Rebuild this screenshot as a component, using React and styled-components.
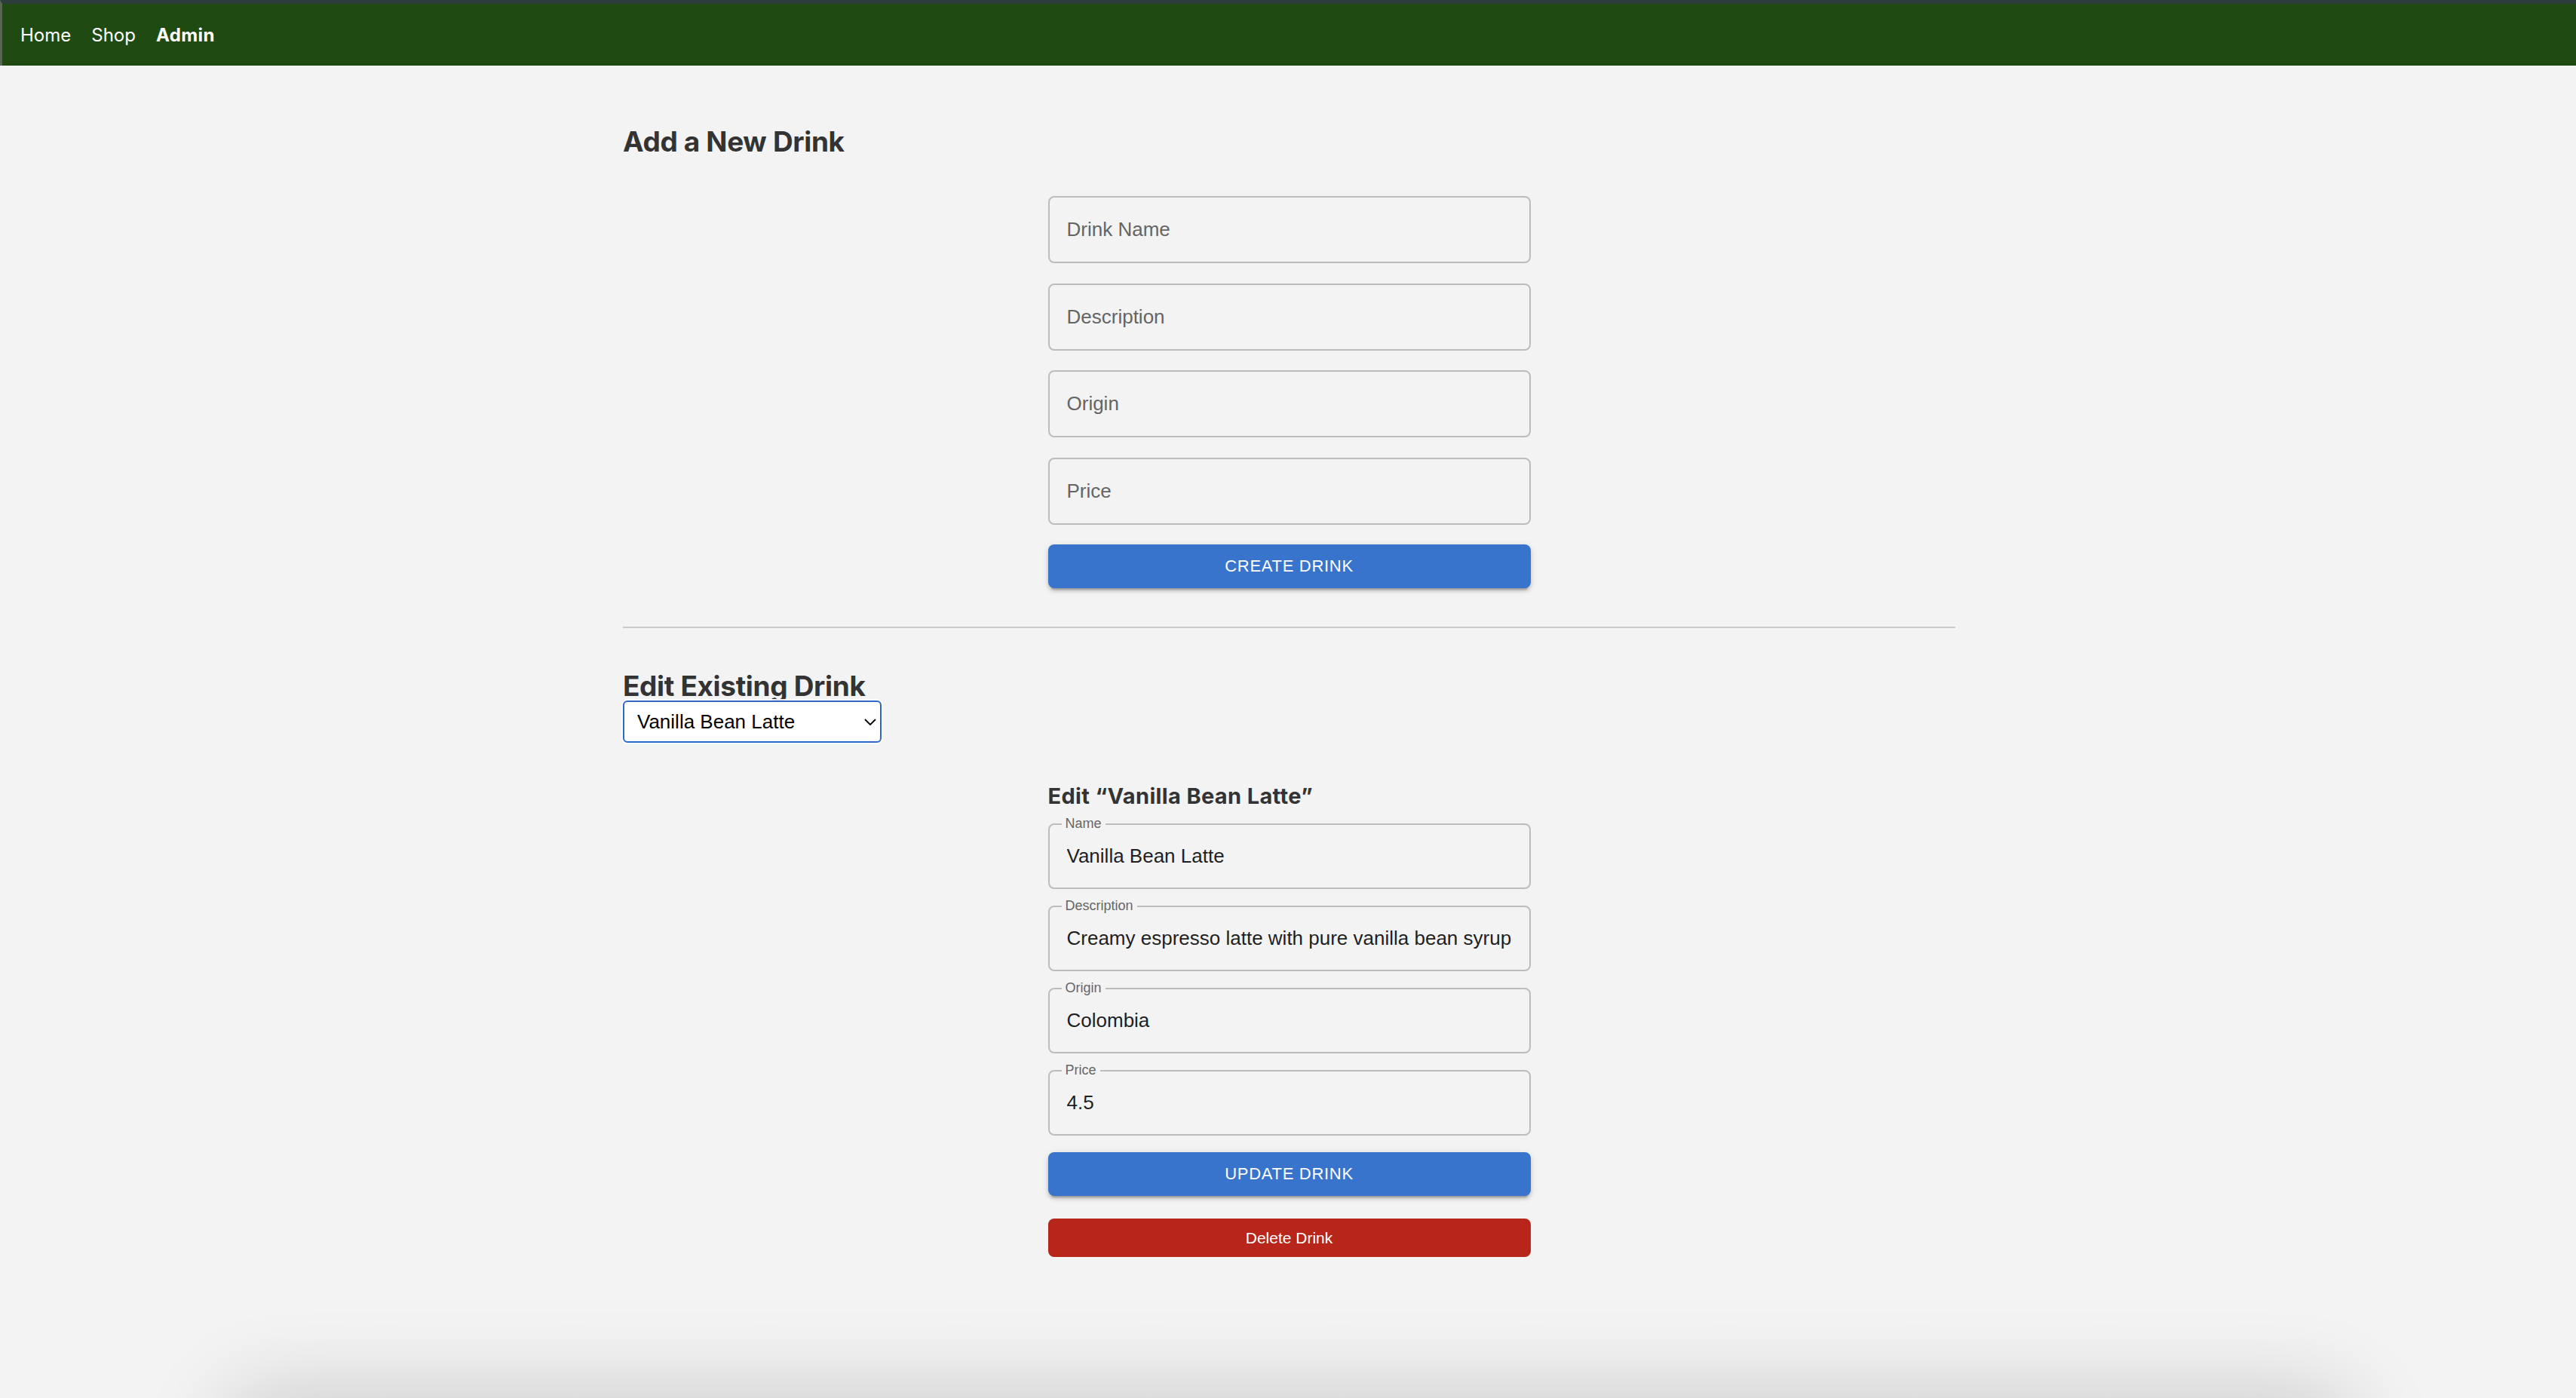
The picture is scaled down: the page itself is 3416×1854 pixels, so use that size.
import React from 'react';
import styled, { createGlobalStyle } from 'styled-components';

const GlobalStyle = createGlobalStyle`
  html, body {
    margin: 0;
    padding: 0;
    height: 100%;
    overflow: hidden;
  }
  body {
    background: #f3f3f3;
    font-family: "Liberation Sans", Arial, sans-serif;
  }
  * {
    box-sizing: border-box;
  }
`;

const Page = styled.div`
  min-height: 100vh;
  padding-left: 3px;
`;

const Navbar = styled.nav`
  height: 87px;
  margin-left: -3px;
  background: #1f4b12;
  border-top: 5px solid #2e3d3b;
  border-left: 3px solid #56664f;
  display: flex;
  align-items: center;
  gap: 27px;
  padding: 0 24px;
  font-family: Inter, "Noto Sans", sans-serif;
`;

const NavLink = styled.a`
  color: #fff;
  font-size: 24px;
  font-weight: ${p => (p.$active ? 700 : 400)};
  letter-spacing: ${p => (p.$active ? 0.4 : 0)}px;
  text-decoration: none;
`;

const Main = styled.main`
  width: 1767px;
  margin: 0 auto;
  padding-top: 82px;
`;

const Heading = styled.h2`
  margin: 0;
  font-family: Inter, "Noto Sans", sans-serif;
  font-size: ${p => (p.$small ? 29 : 37)}px;
  line-height: ${p => (p.$small ? '28px' : '38px')};
  font-weight: 700;
  color: #333;
  letter-spacing: ${p => (p.$small ? 0.35 : -0.35)}px;
`;

const FormColumn = styled.form`
  width: 640px;
  margin: ${p => p.$top}px auto 0;
  display: flex;
  flex-direction: column;
  gap: ${p => p.$gap}px;
`;

const Field = styled.div`
  position: relative;
`;

const TextInput = styled.input`
  display: block;
  width: 100%;
  height: ${p => (p.$compact ? 87 : 89)}px;
  padding: 0 23px;
  border: 2px solid #bdbdbd;
  border-radius: 8px;
  background: transparent;
  font-family: "Liberation Sans", Arial, sans-serif;
  font-size: 26px;
  color: #1f1f1f;
  outline: none;

  &::placeholder {
    color: #656565;
  }
`;

const FloatLabel = styled.label`
  position: absolute;
  left: 18px;
  top: 0;
  transform: translateY(-50%);
  padding: 0 5px;
  background: #f3f3f3;
  font-size: 18px;
  line-height: 1;
  color: #666;
`;

const Button = styled.button`
  display: block;
  width: 100%;
  height: ${p => (p.$danger ? 51 : 58)}px;
  margin-top: ${p => p.$mt || 0}px;
  border: none;
  border-radius: 8px;
  background: ${p => (p.$danger ? '#b8261b' : '#3874cb')};
  color: #fff;
  font-family: "Liberation Sans", Arial, sans-serif;
  font-size: ${p => (p.$danger ? 21 : 22)}px;
  letter-spacing: ${p => (p.$danger ? 0 : 0.7)}px;
  text-transform: ${p => (p.$danger ? 'none' : 'uppercase')};
  box-shadow: ${p =>
    p.$danger
      ? 'none'
      : '0 6px 2px -4px rgba(0,0,0,.2), 0 4px 4px 0 rgba(0,0,0,.14), 0 2px 10px 0 rgba(0,0,0,.12)'};
  cursor: pointer;
`;

const Divider = styled.hr`
  margin: 51px 0 0;
  border: none;
  height: 2px;
  background: #cbcbcb;
`;

const EditSection = styled.section`
  margin-top: 58px;
`;

const SelectWrap = styled.div`
  position: relative;
  width: 343px;
  height: 56px;
`;

const Select = styled.select`
  appearance: none;
  width: 100%;
  height: 100%;
  padding: 0 40px 0 17px;
  border: 2px solid #2f67cc;
  border-radius: 6px;
  background: #fff;
  box-shadow: 0 0 0 2px rgba(255, 255, 255, 0.9);
  font-family: "Liberation Sans", Arial, sans-serif;
  font-size: 26px;
  color: #000;
  outline: none;
`;

const Chevron = styled.svg`
  position: absolute;
  right: 7px;
  top: 24px;
  pointer-events: none;
`;

const ShadowCard = styled.div`
  width: 2800px;
  height: 300px;
  margin: 189px auto 0;
  background: #f3f3f3;
  box-shadow: 0 0 120px rgba(0, 0, 0, 0.2);
`;

const drink = {
  name: 'Vanilla Bean Latte',
  description: 'Creamy espresso latte with pure vanilla bean syrup',
  origin: 'Colombia',
  price: '4.5',
};

export default function App() {
  return (
    <Page>
      <GlobalStyle />
      <Navbar>
        <NavLink href="#">Home</NavLink>
        <NavLink href="#">Shop</NavLink>
        <NavLink href="#" $active>Admin</NavLink>
      </Navbar>

      <Main>
        <Heading>Add a New Drink</Heading>
        <FormColumn $top={53} $gap={26.5} onSubmit={e => e.preventDefault()}>
          <TextInput placeholder="Drink Name" />
          <TextInput placeholder="Description" />
          <TextInput placeholder="Origin" />
          <TextInput placeholder="Price" />
          <Button type="submit">Create Drink</Button>
        </FormColumn>

        <Divider />

        <EditSection>
          <Heading>Edit Existing Drink</Heading>
          <SelectWrap>
            <Select defaultValue={drink.name}>
              <option>{drink.name}</option>
            </Select>
            <Chevron width="16" height="9" viewBox="0 0 16 9">
              <path d="M1 1l7 7 7-7" fill="none" stroke="#111" strokeWidth="2" />
            </Chevron>
          </SelectWrap>

          <FormColumn $top={57} $gap={22} onSubmit={e => e.preventDefault()}>
            <Heading $small>Edit “{drink.name}”</Heading>
            <Field>
              <FloatLabel>Name</FloatLabel>
              <TextInput $compact defaultValue={drink.name} />
            </Field>
            <Field>
              <FloatLabel>Description</FloatLabel>
              <TextInput $compact defaultValue={drink.description} />
            </Field>
            <Field>
              <FloatLabel>Origin</FloatLabel>
              <TextInput $compact defaultValue={drink.origin} />
            </Field>
            <Field>
              <FloatLabel>Price</FloatLabel>
              <TextInput $compact defaultValue={drink.price} />
            </Field>
            <div>
              <Button type="submit">Update Drink</Button>
              <Button type="button" $danger $mt={30}>Delete Drink</Button>
            </div>
          </FormColumn>
        </EditSection>
      </Main>
      <ShadowCard />
    </Page>
  );
}
